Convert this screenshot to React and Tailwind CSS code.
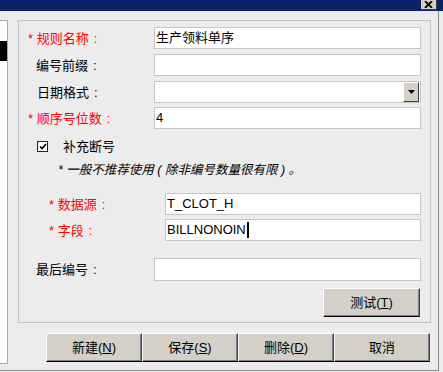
const font = { fontFamily: '"Liberation Sans", "Noto Sans CJK SC", sans-serif' };

function Field({ label, required, indent, labelWidth, inputWidth, value, caret, top, children }) {
  return (
    <div className={`flex items-center h-[22px] ${top}`}>
      <div className={`${labelWidth} ${indent} text-[13px] leading-none whitespace-nowrap ${required ? 'text-[#ff0000]' : 'text-black'}`}>
        {required ? '* ' : ''}{label}<span className="ml-[5px]">:</span>
      </div>
      <div className={`${inputWidth} h-full bg-white border border-[#c6c6c6] flex items-center pl-[1px] relative text-[13px] text-black`}>
        <span>{value}</span>
        {caret && <span className="w-[2px] h-[16px] bg-black ml-[1px]" />}
        {children}
      </div>
    </div>
  );
}

function WinButton({ children, className }) {
  return (
    <div className={`bg-[#d4d0c8] border-t border-l border-white border-r border-b border-r-[#404040] border-b-[#000000] shadow-[inset_-1px_-1px_0_#808080] flex items-center justify-center text-[13px] text-black ${className}`}>
      {children}
    </div>
  );
}

export default function App() {
  return (
    <div className="w-[443px] h-[372px] bg-[#ececec] flex flex-col overflow-hidden" style={font}>
      {/* title bar */}
      <div className="h-[11px] bg-[#0a246a] flex justify-end pr-[6px] shrink-0">
        <div className="w-[16px] h-[10px] bg-[#d4d0c8] border-r border-b border-[#404040] flex items-center justify-center">
          <svg width="9" height="7" viewBox="0 0 9 7"><path d="M1 0l7 7M8 0l-7 7" stroke="#000" strokeWidth="1.8" /></svg>
        </div>
      </div>

      <div className="flex-1 flex border-r border-b border-[#8a8a8a] mr-[4px] mb-[1px]">
        {/* left list pane */}
        <div className="w-[8px] h-[344px] mt-[9px] bg-white border-t border-r border-b border-[#a8a8a8] shrink-0">
          <div className="mt-[20px] h-[20px] bg-black" />
        </div>

        <div className="ml-[10px] flex flex-col">
          {/* group box */}
          <div className="mt-[9px] w-[413px] h-[303px] border border-[#c4c4c4] flex flex-col">
            <Field label="规则名称" required indent="pl-[9px]" labelWidth="w-[135px]" inputWidth="w-[267px]" value="生产领料单序" top="mt-[6px]" />
            <Field label="编号前缀" indent="pl-[17px]" labelWidth="w-[135px]" inputWidth="w-[267px]" value="" top="mt-[5px]" />
            <Field label="日期格式" indent="pl-[18px]" labelWidth="w-[135px]" inputWidth="w-[267px]" value="" top="mt-[5px]">
              <div className="absolute right-[1px] top-0 bottom-0 w-[16px] bg-[#d4d0c8] border-t border-l border-white border-r border-b border-r-[#404040] border-b-[#404040] flex items-center justify-center">
                <svg width="7" height="4" viewBox="0 0 7 4"><path d="M0 0h7L3.5 4z" fill="#000" /></svg>
              </div>
            </Field>
            <Field label="顺序号位数" required indent="pl-[9px]" labelWidth="w-[135px]" inputWidth="w-[267px]" value="4" top="mt-[4px]" />

            {/* checkbox */}
            <div className="flex items-center h-[15px] mt-[10px] pl-[18px]">
              <div className="w-[11px] h-[11px] border border-[#222] bg-white flex items-center justify-center">
                <svg width="8" height="7" viewBox="0 0 8 7"><path d="M1 3.5l2 2 4-4.5" stroke="#000" strokeWidth="1.6" fill="none" /></svg>
              </div>
              <span className="ml-[15px] text-[13px] leading-none text-black">补充断号</span>
            </div>

            <div className="h-[16px] mt-[8px] pl-[39px] text-[12.5px] italic leading-[16px] text-black whitespace-nowrap">
              * 一般不推荐使用 ( 除非编号数量很有限 ) 。
            </div>

            <Field label="数据源" required indent="pl-[30px]" labelWidth="w-[146px]" inputWidth="w-[256px]" value="T_CLOT_H" top="mt-[15px]" />
            <Field label="字段" required indent="pl-[30px]" labelWidth="w-[146px]" inputWidth="w-[256px]" value="BILLNONOIN" caret top="mt-[4px]" />

            <Field label="最后编号" indent="pl-[17px]" labelWidth="w-[135px]" inputWidth="w-[267px]" value="" top="mt-[17px] !h-[23px]" />

            <div className="flex justify-end pr-[10px] mt-[7px]">
              <WinButton className="w-[97px] h-[29px]">
                测试(<span className="underline">T</span>)
              </WinButton>
            </div>
          </div>

          {/* bottom buttons */}
          <div className="flex ml-[28px] mt-[10px]">
            <WinButton className="w-[96px] h-[29px]">新建(<span className="underline">N</span>)</WinButton>
            <WinButton className="w-[96px] h-[29px]">保存(<span className="underline">S</span>)</WinButton>
            <WinButton className="w-[96px] h-[29px]">删除(<span className="underline">D</span>)</WinButton>
            <WinButton className="w-[96px] h-[29px]">取消</WinButton>
          </div>
        </div>
      </div>
    </div>
  );
}
